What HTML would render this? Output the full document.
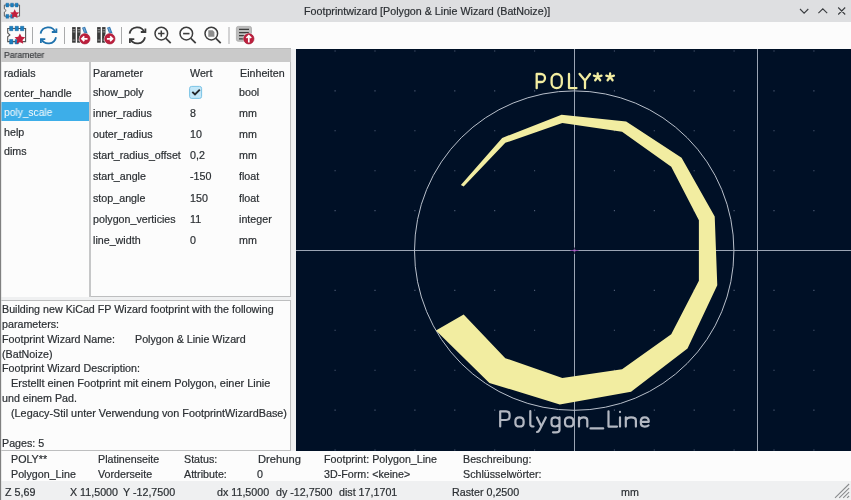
<!DOCTYPE html>
<html><head><meta charset="utf-8">
<style>
*{margin:0;padding:0;box-sizing:border-box}
html,body{width:851px;height:500px;overflow:hidden;background:#fcfcfc;font-family:"Liberation Sans",sans-serif;font-size:10.6px;color:#2b2f33;-webkit-font-smoothing:antialiased}
.t{position:absolute;white-space:pre;line-height:0;height:0;margin-top:-3.7px;will-change:transform;-webkit-text-stroke:0.2px currentColor;transform:scaleX(1.01);transform-origin:0 0}
.b{position:absolute}
</style></head><body>
<!-- title bar -->
<div class="b" style="left:0;top:0;width:851px;height:22px;background:#dedfe1"></div>
<div class="t" style="left:303.5px;top:14.8px">Footprintwizard [Polygon &amp; Linie Wizard (BatNoize)]</div>
<!-- toolbar -->
<div class="b" style="left:0;top:22px;width:851px;height:27px;background:#fcfcfc"></div>
<!-- left pane -->
<div class="b" style="left:0;top:49px;width:296px;height:402px;background:#eff0f1"></div>
<div class="b" style="left:1px;top:48px;width:290px;height:14px;background:#cacaca;border-top:1px solid #bdbdbd"></div>
<div class="t" style="left:4.2px;top:58.9px;font-size:9px;color:#3c3f42;transform:scaleX(0.96)">Parameter</div>
<div class="b" style="left:1px;top:62px;width:89px;height:235px;background:#fcfcfc"></div>
<div class="b" style="left:89px;top:62px;width:2px;height:235px;background:#c6c7c8"></div>
<div class="b" style="left:91px;top:62px;width:200px;height:235px;background:#fcfcfc;border-right:1px solid #bdbebf;border-bottom:1px solid #bdbebf"></div>
<div class="b" style="left:1px;top:102px;width:88px;height:19px;background:#3daee9"></div>
<div class="t" style="left:4px;top:77px">radials</div>
<div class="t" style="left:4px;top:96.5px">center_handle</div>
<div class="t" style="left:4px;top:116px;color:#fcfcfc;-webkit-text-stroke:0;transform:scaleX(0.965)">poly_scale</div>
<div class="t" style="left:4px;top:135.5px">help</div>
<div class="t" style="left:4px;top:155px">dims</div>

<div class="t" style="left:92.7px;top:76.5px">Parameter</div>
<div class="t" style="left:190px;top:76.5px">Wert</div>
<div class="t" style="left:239.8px;top:76.5px">Einheiten</div>

<div class="t" style="left:92.7px;top:95.5px">show_poly</div>
<svg class="b" style="left:186px;top:83px" width="20" height="20" viewBox="186 83 20 20">
<rect x="189.6" y="86.4" width="12" height="12" rx="2" fill="#c3e7f8" stroke="#6fbde3" stroke-width="0.9"/>
<path d="M192.3,91.8 L195,94.5 L199.8,89.6" fill="none" stroke="#232629" stroke-width="1.9"/>
</svg>
<div class="t" style="left:239px;top:95.5px">bool</div>
<div class="t" style="left:92.7px;top:116.6px">inner_radius</div>
<div class="t" style="left:190px;top:116.6px">8</div>
<div class="t" style="left:239px;top:116.6px">mm</div>
<div class="t" style="left:92.7px;top:137.8px">outer_radius</div>
<div class="t" style="left:190px;top:137.8px">10</div>
<div class="t" style="left:239px;top:137.8px">mm</div>
<div class="t" style="left:92.7px;top:158.9px">start_radius_offset</div>
<div class="t" style="left:190px;top:158.9px">0,2</div>
<div class="t" style="left:239px;top:158.9px">mm</div>
<div class="t" style="left:92.7px;top:180.1px">start_angle</div>
<div class="t" style="left:190px;top:180.1px">-150</div>
<div class="t" style="left:239px;top:180.1px">float</div>
<div class="t" style="left:92.7px;top:201.2px">stop_angle</div>
<div class="t" style="left:190px;top:201.2px">150</div>
<div class="t" style="left:239px;top:201.2px">float</div>
<div class="t" style="left:92.7px;top:222.4px">polygon_verticies</div>
<div class="t" style="left:190px;top:222.4px">11</div>
<div class="t" style="left:239px;top:222.4px">integer</div>
<div class="t" style="left:92.7px;top:243.5px">line_width</div>
<div class="t" style="left:190px;top:243.5px">0</div>
<div class="t" style="left:239px;top:243.5px">mm</div>

<!-- message box -->
<div class="b" style="left:1px;top:300px;width:290px;height:151px;background:#fcfcfc;border:1px solid #bdbebf;border-left:none"></div>
<div class="t" style="left:2px;top:312.7px">Building new KiCad FP Wizard footprint with the following</div>
<div class="t" style="left:2px;top:327.5px">parameters:</div>
<div class="t" style="left:2px;top:342.4px">Footprint Wizard Name:</div>
<div class="t" style="left:135px;top:342.4px">Polygon &amp; Linie Wizard</div>
<div class="t" style="left:2px;top:357.2px">(BatNoize)</div>
<div class="t" style="left:2px;top:372px">Footprint Wizard Description:</div>
<div class="t" style="left:11.3px;top:386.9px;transform:scaleX(1.034)">Erstellt einen Footprint mit einem Polygon, einer Linie</div>
<div class="t" style="left:2px;top:401.7px">und einem Pad.</div>
<div class="t" style="left:10.6px;top:416.5px;transform:scaleX(1.021)">(Legacy-Stil unter Verwendung von FootprintWizardBase)</div>
<div class="t" style="left:2px;top:446.2px">Pages: 5</div>

<!-- canvas -->

<svg class="b" style="left:296px;top:49px" width="555" height="402" viewBox="296 49 555 402">
<rect x="296" y="49" width="555" height="402" fill="#001026"/>
<path d="M334.55,50.45h1.1v1.1h-1.1zM334.55,90.35h1.1v1.1h-1.1zM334.55,130.25h1.1v1.1h-1.1zM334.55,170.15h1.1v1.1h-1.1zM334.55,210.05h1.1v1.1h-1.1zM334.55,249.95h1.1v1.1h-1.1zM334.55,289.85h1.1v1.1h-1.1zM334.55,329.75h1.1v1.1h-1.1zM334.55,369.65h1.1v1.1h-1.1zM334.55,409.55h1.1v1.1h-1.1zM334.55,449.45h1.1v1.1h-1.1zM374.45,50.45h1.1v1.1h-1.1zM374.45,90.35h1.1v1.1h-1.1zM374.45,130.25h1.1v1.1h-1.1zM374.45,170.15h1.1v1.1h-1.1zM374.45,210.05h1.1v1.1h-1.1zM374.45,249.95h1.1v1.1h-1.1zM374.45,289.85h1.1v1.1h-1.1zM374.45,329.75h1.1v1.1h-1.1zM374.45,369.65h1.1v1.1h-1.1zM374.45,409.55h1.1v1.1h-1.1zM374.45,449.45h1.1v1.1h-1.1zM414.35,50.45h1.1v1.1h-1.1zM414.35,90.35h1.1v1.1h-1.1zM414.35,130.25h1.1v1.1h-1.1zM414.35,170.15h1.1v1.1h-1.1zM414.35,210.05h1.1v1.1h-1.1zM414.35,249.95h1.1v1.1h-1.1zM414.35,289.85h1.1v1.1h-1.1zM414.35,329.75h1.1v1.1h-1.1zM414.35,369.65h1.1v1.1h-1.1zM414.35,409.55h1.1v1.1h-1.1zM414.35,449.45h1.1v1.1h-1.1zM454.25,50.45h1.1v1.1h-1.1zM454.25,90.35h1.1v1.1h-1.1zM454.25,130.25h1.1v1.1h-1.1zM454.25,170.15h1.1v1.1h-1.1zM454.25,210.05h1.1v1.1h-1.1zM454.25,249.95h1.1v1.1h-1.1zM454.25,289.85h1.1v1.1h-1.1zM454.25,329.75h1.1v1.1h-1.1zM454.25,369.65h1.1v1.1h-1.1zM454.25,409.55h1.1v1.1h-1.1zM454.25,449.45h1.1v1.1h-1.1zM494.15,50.45h1.1v1.1h-1.1zM494.15,90.35h1.1v1.1h-1.1zM494.15,130.25h1.1v1.1h-1.1zM494.15,170.15h1.1v1.1h-1.1zM494.15,210.05h1.1v1.1h-1.1zM494.15,249.95h1.1v1.1h-1.1zM494.15,289.85h1.1v1.1h-1.1zM494.15,329.75h1.1v1.1h-1.1zM494.15,369.65h1.1v1.1h-1.1zM494.15,409.55h1.1v1.1h-1.1zM494.15,449.45h1.1v1.1h-1.1zM534.05,50.45h1.1v1.1h-1.1zM534.05,90.35h1.1v1.1h-1.1zM534.05,130.25h1.1v1.1h-1.1zM534.05,170.15h1.1v1.1h-1.1zM534.05,210.05h1.1v1.1h-1.1zM534.05,249.95h1.1v1.1h-1.1zM534.05,289.85h1.1v1.1h-1.1zM534.05,329.75h1.1v1.1h-1.1zM534.05,369.65h1.1v1.1h-1.1zM534.05,409.55h1.1v1.1h-1.1zM534.05,449.45h1.1v1.1h-1.1zM573.95,50.45h1.1v1.1h-1.1zM573.95,90.35h1.1v1.1h-1.1zM573.95,130.25h1.1v1.1h-1.1zM573.95,170.15h1.1v1.1h-1.1zM573.95,210.05h1.1v1.1h-1.1zM573.95,249.95h1.1v1.1h-1.1zM573.95,289.85h1.1v1.1h-1.1zM573.95,329.75h1.1v1.1h-1.1zM573.95,369.65h1.1v1.1h-1.1zM573.95,409.55h1.1v1.1h-1.1zM573.95,449.45h1.1v1.1h-1.1zM613.85,50.45h1.1v1.1h-1.1zM613.85,90.35h1.1v1.1h-1.1zM613.85,130.25h1.1v1.1h-1.1zM613.85,170.15h1.1v1.1h-1.1zM613.85,210.05h1.1v1.1h-1.1zM613.85,249.95h1.1v1.1h-1.1zM613.85,289.85h1.1v1.1h-1.1zM613.85,329.75h1.1v1.1h-1.1zM613.85,369.65h1.1v1.1h-1.1zM613.85,409.55h1.1v1.1h-1.1zM613.85,449.45h1.1v1.1h-1.1zM653.75,50.45h1.1v1.1h-1.1zM653.75,90.35h1.1v1.1h-1.1zM653.75,130.25h1.1v1.1h-1.1zM653.75,170.15h1.1v1.1h-1.1zM653.75,210.05h1.1v1.1h-1.1zM653.75,249.95h1.1v1.1h-1.1zM653.75,289.85h1.1v1.1h-1.1zM653.75,329.75h1.1v1.1h-1.1zM653.75,369.65h1.1v1.1h-1.1zM653.75,409.55h1.1v1.1h-1.1zM653.75,449.45h1.1v1.1h-1.1zM693.65,50.45h1.1v1.1h-1.1zM693.65,90.35h1.1v1.1h-1.1zM693.65,130.25h1.1v1.1h-1.1zM693.65,170.15h1.1v1.1h-1.1zM693.65,210.05h1.1v1.1h-1.1zM693.65,249.95h1.1v1.1h-1.1zM693.65,289.85h1.1v1.1h-1.1zM693.65,329.75h1.1v1.1h-1.1zM693.65,369.65h1.1v1.1h-1.1zM693.65,409.55h1.1v1.1h-1.1zM693.65,449.45h1.1v1.1h-1.1zM733.55,50.45h1.1v1.1h-1.1zM733.55,90.35h1.1v1.1h-1.1zM733.55,130.25h1.1v1.1h-1.1zM733.55,170.15h1.1v1.1h-1.1zM733.55,210.05h1.1v1.1h-1.1zM733.55,249.95h1.1v1.1h-1.1zM733.55,289.85h1.1v1.1h-1.1zM733.55,329.75h1.1v1.1h-1.1zM733.55,369.65h1.1v1.1h-1.1zM733.55,409.55h1.1v1.1h-1.1zM733.55,449.45h1.1v1.1h-1.1zM773.45,50.45h1.1v1.1h-1.1zM773.45,90.35h1.1v1.1h-1.1zM773.45,130.25h1.1v1.1h-1.1zM773.45,170.15h1.1v1.1h-1.1zM773.45,210.05h1.1v1.1h-1.1zM773.45,249.95h1.1v1.1h-1.1zM773.45,289.85h1.1v1.1h-1.1zM773.45,329.75h1.1v1.1h-1.1zM773.45,369.65h1.1v1.1h-1.1zM773.45,409.55h1.1v1.1h-1.1zM773.45,449.45h1.1v1.1h-1.1zM813.35,50.45h1.1v1.1h-1.1zM813.35,90.35h1.1v1.1h-1.1zM813.35,130.25h1.1v1.1h-1.1zM813.35,170.15h1.1v1.1h-1.1zM813.35,210.05h1.1v1.1h-1.1zM813.35,249.95h1.1v1.1h-1.1zM813.35,289.85h1.1v1.1h-1.1zM813.35,329.75h1.1v1.1h-1.1zM813.35,369.65h1.1v1.1h-1.1zM813.35,409.55h1.1v1.1h-1.1zM813.35,449.45h1.1v1.1h-1.1z" fill="#52607a"/>
<path d="M574.5,49 V451 M296,250.5 H851" stroke="#9ba5b4" stroke-width="1"/>
<path d="M757.5,49 V451" stroke="#9ba5b4" stroke-width="1"/>
<circle cx="574.2" cy="250.6" r="159.7" fill="none" stroke="#b8bfca" stroke-width="1"/>
<path d="M460.88,184.90 L502.15,137.92 L561.53,114.68 L626.18,121.41 L681.57,157.72 L714.72,216.48 L717.27,285.14 L687.51,348.42 L631.05,391.75 L559.79,404.56 L489.41,382.90 L435.94,330.50 L463.65,314.50 L505.30,358.18 L562.33,377.92 L622.07,369.33 L671.24,334.32 L698.89,280.68 L698.89,220.32 L671.24,166.68 L622.07,131.67 L562.33,123.08 L505.30,142.82 L463.65,186.50Z" fill="#f2eda1"/>
<path d="M574.5,247.5 V254" stroke="#3a3552" stroke-width="1"/><path d="M570.5,250.5 H578.5" stroke="#8a4aa8" stroke-width="1"/><rect x="573.5" y="249.5" width="2" height="2" fill="#c070d0" opacity="0.8"/>
<g fill="none" stroke="#f2eda1" stroke-width="2.3" stroke-linecap="round" stroke-linejoin="round">
 <path d="M536.7,88.2 V74 H541 A4,4 0 0 1 541,82 H536.7"/>
 <path d="M551.6,79.1 A5.1,5.1 0 0 1 561.8,79.1 V83 A5.1,5.1 0 0 1 551.6,83 Z"/>
 <path d="M569,74 V88.1 H576.5"/>
 <path d="M579.6,74 L585,80.6 L590,74 M585,80.6 V88.2"/>
 <path d="M597.7,73.3 V77 M593.9,75.7 L597.7,77 L601.5,75.7 M595.2,80.3 L597.7,77 L600.2,80.3"/>
 <path d="M610.1,73.3 V77 M606.3,75.7 L610.1,77 L613.9,75.7 M607.6,80.3 L610.1,77 L612.6,80.3"/>
</g>
<g fill="none" stroke="#b3b8c2" stroke-width="2.2" stroke-linecap="round" stroke-linejoin="round">
 <path d="M500.2,426.5 V411.3 H506 Q509.6,411.3 509.6,415 V416.3 Q509.6,420 506,420 H500.2"/>
 <path d="M519.5,417.4 Q523.6,417.4 523.6,421 V422.9 Q523.6,426.5 519.5,426.5 Q515.4,426.5 515.4,422.9 V421 Q515.4,417.4 519.5,417.4 Z"/>
 <path d="M530.3,411 V424.5 Q530.3,426.5 533.5,426.5"/>
 <path d="M537,417.4 L541.4,426.5 M545.8,417.4 L539.5,430 Q538.6,432 537,432"/>
 <path d="M559.5,417.4 V430 Q559.5,432.3 556,432.3 H553 M559.5,419.5 Q558,417.4 555.4,417.4 Q551.5,417.4 551.5,420.5 V423.5 Q551.5,426.5 555.4,426.5 Q558,426.5 559.5,424.2"/>
 <path d="M569.2,417.4 Q573.4,417.4 573.4,421 V422.9 Q573.4,426.5 569.2,426.5 Q565,426.5 565,422.9 V421 Q565,417.4 569.2,417.4 Z"/>
 <path d="M579,417.4 V426.6 M579,420 Q580.5,417.4 583.5,417.4 Q587.3,417.4 587.3,420.5 V426.6"/>
 <path d="M590.5,428.4 H603.2"/>
 <path d="M608.5,411.3 V426.6 H617"/>
 <path d="M620,417.4 V426.6 M620,411.9 V412"/>
 <path d="M625.8,417.4 V426.6 M625.8,420 Q627.3,417.4 631,417.4 Q635.9,417.4 635.9,420.5 V426.6"/>
 <path d="M640.8,421.8 H648.8 Q648.8,417.4 644.8,417.4 Q640.8,417.4 640.8,421.5 V422.5 Q640.8,426.6 644.8,426.6 Q647.5,426.6 648.5,425.4"/>
</g>
</svg>


<!-- info panel -->
<div class="b" style="left:0;top:451px;width:851px;height:30px;background:#fcfcfc"></div>
<div class="t" style="left:10.8px;top:463px">POLY**</div>
<div class="t" style="left:10.8px;top:477.5px">Polygon_Line</div>
<div class="t" style="left:98px;top:463px">Platinenseite</div>
<div class="t" style="left:98px;top:477.5px">Vorderseite</div>
<div class="t" style="left:184px;top:463px">Status:</div>
<div class="t" style="left:184px;top:477.5px">Attribute:</div>
<div class="t" style="left:257.6px;top:463px;transform:scaleX(1.055)">Drehung</div>
<div class="t" style="left:257.4px;top:477.5px">0</div>
<div class="t" style="left:324px;top:463px">Footprint: Polygon_Line</div>
<div class="t" style="left:324px;top:477.5px">3D-Form: &lt;keine&gt;</div>
<div class="t" style="left:463px;top:463px">Beschreibung:</div>
<div class="t" style="left:463px;top:477.5px">Schlüsselwörter:</div>

<!-- status bar -->
<div class="b" style="left:0;top:481px;width:851px;height:19px;background:#eff0f1"></div>
<div class="t" style="left:5px;top:495.2px">Z 5,69</div>
<div class="t" style="left:69.8px;top:495.2px">X 11,5000</div>
<div class="t" style="left:123.4px;top:495.2px">Y -12,7500</div>
<div class="t" style="left:216.9px;top:495.2px">dx 11,5000</div>
<div class="t" style="left:275.7px;top:495.2px">dy -12,7500</div>
<div class="t" style="left:339.2px;top:495.2px">dist 17,1701</div>
<div class="t" style="left:452px;top:495.2px">Raster 0,2500</div>
<div class="t" style="left:621.2px;top:495.2px">mm</div>


<svg class="b" style="left:0;top:0" width="851" height="49" viewBox="0 0 851 49">
<defs>
 <g id="fpw">
  <path d="M3.7,5.5 H21.6 V18.6 H3.7 V13.8 L5.9,11.9 L3.7,10 Z" fill="none" stroke="#555" stroke-width="1.1"/>
  <path d="M5.6,3.3h3.3v4.4h-3.3zM11.1,3.3h3.3v4.4h-3.3zM16.5,3.3h3.3v4.4h-3.3zM5.6,16.5h3.3v4.4h-3.3zM11.1,16.5h3.3v4.4h-3.3z" fill="#1b7fc1" stroke="#15659a" stroke-width="0.5"/>
  <path d="M15.90,10.50 L17.55,13.83 L21.23,14.37 L18.56,16.97 L19.19,20.63 L15.90,18.90 L12.61,20.63 L13.24,16.97 L10.57,14.37 L14.25,13.83Z" fill="#c21f3d"/>
 </g>
 <g id="rot" fill="none" stroke-width="1.8">
  <path d="M4.6,10.2 A7.7,7.7 0 0 1 19.4,9"/>
  <path d="M20.4,5.1 V8.6 H15.8"/>
  <path d="M20,13.8 A7.7,7.7 0 0 1 5.4,15.4"/>
  <path d="M4.9,19.5 V15.7 H9.3"/>
 </g>
 <g id="books">
  <rect x="4.1" y="4.1" width="3.6" height="15.6" fill="#3a3a3a"/>
  <rect x="9.1" y="4.1" width="3.4" height="15.6" fill="#3a3a3a"/>
  <path d="M4.6,6.7h2.6M4.6,8.9h2.6M4.6,17.1h2.6M9.6,6.7h2.4M9.6,8.9h2.4M9.6,17.1h2.4" stroke="#b5b5b5" stroke-width="0.8"/>
  <path d="M14,4.7 L17,3.8 L20.2,12 L17.2,12.9 Z" fill="#2f73ae"/>
  <path d="M15,5 L16.3,4.6 L17.8,8.6 L16.5,9 Z" fill="#6ea6d6"/>
  <circle cx="16.8" cy="15.8" r="6" fill="#fcfcfc"/>
  <circle cx="16.8" cy="15.8" r="5.2" fill="#bd1f3d" stroke="#9e1733" stroke-width="0.6"/>
 </g>
 <g id="mag" fill="none" stroke="#3c3c3c" stroke-width="1.5">
  <circle cx="11.3" cy="10.6" r="6.3"/>
  <path d="M15.9,15.4 L20.7,20.2" stroke-width="1.7"/>
 </g>
</defs>
<!-- title icon -->
<rect x="4.4" y="5.3" width="15" height="11.3" fill="#eeeff0"/><use href="#fpw" transform="translate(1.2,0.4) scale(0.85)"/>
<!-- window controls -->
<path d="M800,9 L804.1,13.2 L808.3,9 M818.4,13.2 L822.8,8.8 L827.2,13.2 M838.2,7.5 L845.2,14.5 M845.2,7.5 L838.2,14.5" fill="none" stroke="#3b3e41" stroke-width="1.1"/>
<!-- toolbar -->
<use href="#fpw" transform="translate(4,23)"/>
<rect x="32" y="27" width="1" height="17" fill="#a9aaab"/>
<use href="#rot" transform="translate(36,23.4)" stroke="#1f72ad"/>
<rect x="64" y="27" width="1" height="17" fill="#a9aaab"/>
<use href="#books" transform="translate(68,23)"/>
<path d="M87.5,14.9 H81.9 M84.3,12.5 L81.9,14.9 L84.3,17.3" transform="translate(0,23.9)" fill="none" stroke="#fff" stroke-width="1.7"/>
<use href="#books" transform="translate(93,23)"/>
<path d="M106.9,14.9 H112.5 M110.1,12.5 L112.5,14.9 L110.1,17.3" transform="translate(0,23.9)" fill="none" stroke="#fff" stroke-width="1.7"/>
<rect x="121" y="27" width="1" height="17" fill="#a9aaab"/>
<use href="#rot" transform="translate(125,23.4)" stroke="#3a3a3a"/>
<use href="#mag" transform="translate(150,23)"/>
<path d="M158.1,33.6 H164.5 M161.3,30.4 V36.8" stroke="#3c3c3c" stroke-width="1.5"/>
<use href="#mag" transform="translate(175,23)"/>
<path d="M183.1,33.6 H189.5" stroke="#3c3c3c" stroke-width="1.6"/>
<use href="#mag" transform="translate(200,23)"/>
<path d="M208.3,30.3 H212.6 L214.4,32.1 V36.7 H208.3 Z" fill="#8c8c8c"/>
<rect x="228.5" y="27" width="1" height="17" fill="#a9aaab"/>
<rect x="236.4" y="26.4" width="15.1" height="14.9" rx="1.8" fill="#bdbdbd" stroke="#a3a3a3" stroke-width="0.7"/>
<path d="M239,29.3 H249 M239,32.6 H249 M239,35.7 H249 M239,38.8 H249" stroke="#3d3d3d" stroke-width="1.3"/>
<circle cx="248.8" cy="38.8" r="6" fill="#fcfcfc" opacity="0.7"/><circle cx="248.8" cy="38.8" r="5.2" fill="#bd1f3d" stroke="#9e1733" stroke-width="0.6"/>
<path d="M248.8,42.6 V35.8 M246.4,38 L248.8,35.6 L251.2,38" fill="none" stroke="#fff" stroke-width="1.7"/>
</svg>

<svg class="b" style="left:831px;top:482px" width="20" height="18" viewBox="831 482 20 18">
<path d="M835,497.8 L849.1,484 M839.2,497.8 L849.1,488.2 M843.2,497.8 L849.1,492.2 M847.1,497.8 L849.1,496" stroke="#8a8c8e" stroke-width="1.1"/>
</svg>
<!-- window left border -->
<div class="b" style="left:0;top:0;width:1px;height:500px;background:#808080"></div><div class="b" style="left:1px;top:0;width:1px;height:500px;background:#d4d5d6;opacity:0.5"></div>
</body></html>
